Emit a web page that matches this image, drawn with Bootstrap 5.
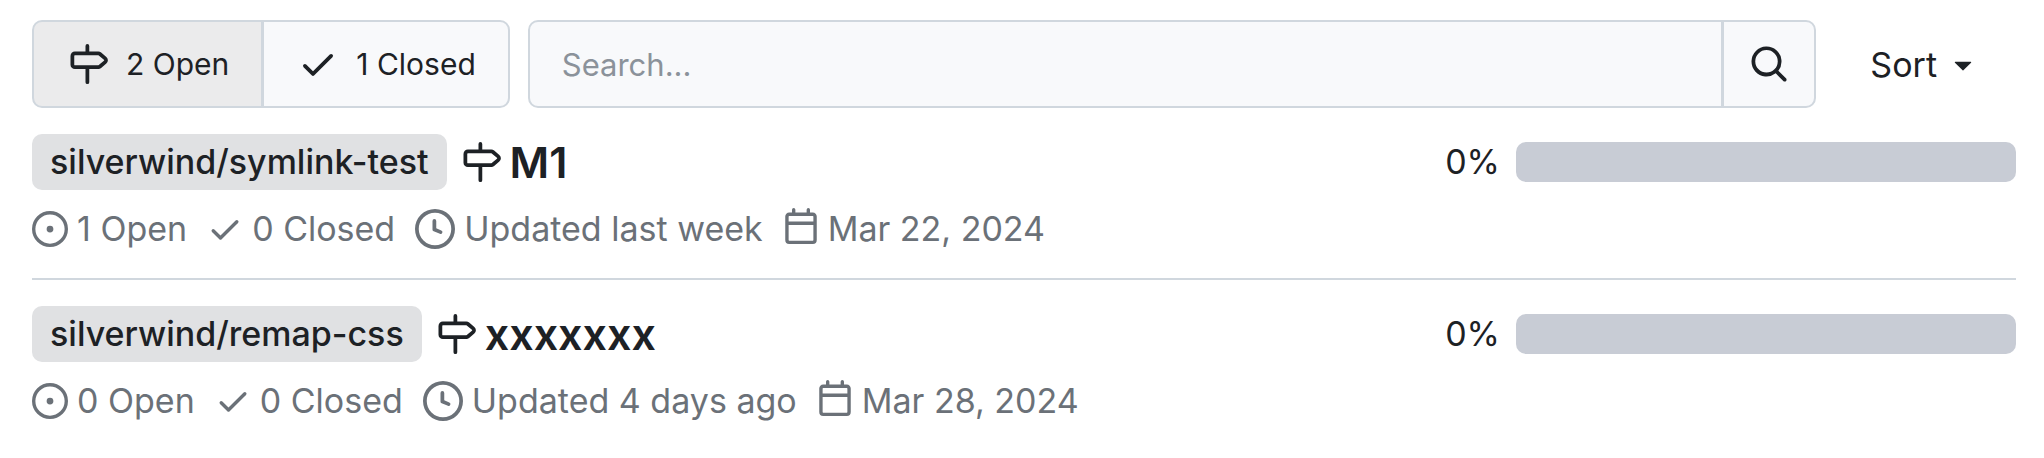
<!DOCTYPE html>
<html lang="en">
<head>
<meta charset="utf-8">
<meta name="viewport" content="width=device-width, initial-scale=1">
<title>Milestones</title>
<link rel="stylesheet" href="https://cdn.jsdelivr.net/npm/bootstrap@5.3.0/dist/css/bootstrap.min.css">
<style>
  :root { --line: #d0d7de; --box: #f8f9fb; --ink: #1d2125; --muted: #6b7178; }
  body { font-family: Inter, "Liberation Sans", sans-serif; font-size: 34px; line-height: 50px; color: var(--ink); background: #fff; }
  .page { padding: 20px 28px 0 32px; }
  svg { fill: currentColor; flex: none; width: 36px; height: 36px; }
  .ico-lg { width: 40px; height: 40px; }
  .toolbar { gap: 18px; }
  .toolbar .btn, .toolbar .form-control { height: 88px; color: var(--ink); border: 2px solid var(--line); background: var(--box); border-radius: 10px; box-shadow: none; }
  .state-tabs .btn { display: flex; align-items: center; gap: 18px; padding: 0 32px 0 34px; font-size: 30px; }
  .state-tabs .btn.active { background: #ebebec; }
  .toolbar .form-control { padding: 0 32px; font-size: 31px; }
  .toolbar .form-control::placeholder { color: #8b929a; opacity: 1; }
  .toolbar .find-btn { padding: 0 25px; display: flex; align-items: center; }
  .toolbar .sort-btn { background: none; border: 0; padding: 0 35px 0 36px; font-size: 34px; display: flex; align-items: center; gap: 8px; }
  .milestone { padding: 26px 0 24px; }
  .milestone + .milestone { border-top: 2px solid var(--line); }
  .milestone-head { margin-bottom: 14px; }
  .repo-tag { background: #e0e1e3; color: inherit; border-radius: 10px; padding: 0 18px; line-height: 56px; font-weight: 500; margin-right: 14px; }
  .milestone h2 { font-size: 43px; line-height: 56px; font-weight: 600; margin: 0; }
  .title-ico { margin-right: 9px; }
  .meter { width: 500px; height: 40px; border-radius: 10px; background: #c8ccd5; }
  .meta { color: var(--muted); gap: 20px; }
  .meta span { display: flex; align-items: center; gap: 9px; }
  .meta .cal { margin-bottom: 6px; }
</style>
</head>
<body>
<svg class="d-none" aria-hidden="true">
  <symbol id="i-milestone" viewBox="0 0 16 16"><path d="M7.75 0a.75.75 0 0 1 .75.75V3h3.634c.414 0 .814.147 1.13.414l2.07 1.75a1.75 1.75 0 0 1 0 2.672l-2.07 1.75a1.75 1.75 0 0 1-1.13.414H8.5v5.25a.75.75 0 0 1-1.5 0V10H2.75A1.75 1.75 0 0 1 1 8.25v-3.5C1 3.784 1.784 3 2.75 3H7V.75A.75.75 0 0 1 7.75 0Zm4.384 8.5a.25.25 0 0 0 .161-.06l2.07-1.75a.248.248 0 0 0 0-.38l-2.07-1.75a.25.25 0 0 0-.161-.06H2.75a.25.25 0 0 0-.25.25v3.5c0 .138.112.25.25.25h9.384Z"/></symbol>
  <symbol id="i-check" viewBox="0 0 16 16"><path d="M13.78 4.22a.75.75 0 0 1 0 1.06l-7.25 7.25a.75.75 0 0 1-1.06 0L2.22 9.28a.751.751 0 0 1 .018-1.042.751.751 0 0 1 1.042-.018L6 10.94l6.72-6.72a.75.75 0 0 1 1.06 0Z"/></symbol>
  <symbol id="i-issue" viewBox="0 0 16 16"><path d="M8 9.5a1.5 1.5 0 1 0 0-3 1.5 1.5 0 0 0 0 3Z"/><path d="M8 0a8 8 0 1 1 0 16A8 8 0 0 1 8 0ZM1.5 8a6.5 6.5 0 1 0 13 0 6.5 6.5 0 0 0-13 0Z"/></symbol>
  <symbol id="i-clock" viewBox="0 0 16 16"><path d="M8 0a8 8 0 1 1 0 16A8 8 0 0 1 8 0ZM1.5 8a6.5 6.5 0 1 0 13 0 6.5 6.5 0 0 0-13 0Zm7-3.25v2.992l2.028.812a.75.75 0 0 1-.557 1.392l-2.5-1A.751.751 0 0 1 7 8.25v-3.5a.75.75 0 0 1 1.5 0Z"/></symbol>
  <symbol id="i-calendar" viewBox="0 0 16 16"><path d="M4.75 0a.75.75 0 0 1 .75.75V2h5V.75a.75.75 0 0 1 1.5 0V2h1.25c.966 0 1.75.784 1.75 1.75v10.5A1.75 1.75 0 0 1 13.25 16H2.75A1.75 1.75 0 0 1 1 14.25V3.75C1 2.784 1.784 2 2.75 2H4V.75A.75.75 0 0 1 4.75 0ZM2.5 7.5v6.75c0 .138.112.25.25.25h10.5a.25.25 0 0 0 .25-.25V7.5Zm10.75-4H2.75a.25.25 0 0 0-.25.25V6h11V3.75a.25.25 0 0 0-.25-.25Z"/></symbol>
  <symbol id="i-search" viewBox="0 0 16 16"><path d="M10.68 11.74a6 6 0 0 1-7.922-8.982 6 6 0 0 1 8.982 7.922l3.04 3.04a.749.749 0 0 1-.326 1.275.749.749 0 0 1-.734-.215ZM11.5 7a4.499 4.499 0 1 0-8.997 0A4.499 4.499 0 0 0 11.5 7Z"/></symbol>
  <symbol id="i-down" viewBox="0 0 16 16"><path d="m4.427 7.427 3.396 3.396a.25.25 0 0 0 .354 0l3.396-3.396A.25.25 0 0 0 11.396 7H4.604a.25.25 0 0 0-.177.427Z"/></symbol>
</svg>

<main class="page">
  <div class="toolbar d-flex align-items-center">
    <div class="btn-group state-tabs flex-shrink-0" role="group" aria-label="State">
      <button type="button" class="btn active"><svg class="ico-lg"><use href="#i-milestone"/></svg>2 Open</button>
      <button type="button" class="btn"><svg class="ico-lg"><use href="#i-check"/></svg>1 Closed</button>
    </div>
    <form class="input-group flex-fill w-auto" role="search">
      <input type="search" class="form-control" placeholder="Search..." aria-label="Search">
      <button type="button" class="btn find-btn" aria-label="Search"><svg class="ico-lg"><use href="#i-search"/></svg></button>
    </form>
    <button type="button" class="btn sort-btn flex-shrink-0">Sort<svg><use href="#i-down"/></svg></button>
  </div>

  <section class="milestone">
    <div class="milestone-head d-flex align-items-center">
      <a href="#" class="repo-tag text-decoration-none">silverwind/symlink-test</a>
      <svg class="ico-lg title-ico"><use href="#i-milestone"/></svg>
      <h2><a href="#" class="text-reset text-decoration-none">M1</a></h2>
      <div class="ms-auto me-3">0%</div>
      <div class="meter" role="progressbar" aria-label="M1 progress" aria-valuenow="0" aria-valuemin="0" aria-valuemax="100"></div>
    </div>
    <div class="meta d-flex">
      <span><svg><use href="#i-issue"/></svg>1 Open</span>
      <span><svg><use href="#i-check"/></svg>0 Closed</span>
      <span><svg class="ico-lg"><use href="#i-clock"/></svg>Updated last week</span>
      <span><svg class="cal"><use href="#i-calendar"/></svg>Mar 22, 2024</span>
    </div>
  </section>

  <section class="milestone">
    <div class="milestone-head d-flex align-items-center">
      <a href="#" class="repo-tag text-decoration-none">silverwind/remap-css</a>
      <svg class="ico-lg title-ico"><use href="#i-milestone"/></svg>
      <h2><a href="#" class="text-reset text-decoration-none">xxxxxxx</a></h2>
      <div class="ms-auto me-3">0%</div>
      <div class="meter" role="progressbar" aria-label="xxxxxxx progress" aria-valuenow="0" aria-valuemin="0" aria-valuemax="100"></div>
    </div>
    <div class="meta d-flex">
      <span><svg><use href="#i-issue"/></svg>0 Open</span>
      <span><svg><use href="#i-check"/></svg>0 Closed</span>
      <span><svg class="ico-lg"><use href="#i-clock"/></svg>Updated 4 days ago</span>
      <span><svg class="cal"><use href="#i-calendar"/></svg>Mar 28, 2024</span>
    </div>
  </section>
</main>
<script src="https://cdn.jsdelivr.net/npm/bootstrap@5.3.0/dist/js/bootstrap.bundle.min.js"></script>
</body>
</html>
